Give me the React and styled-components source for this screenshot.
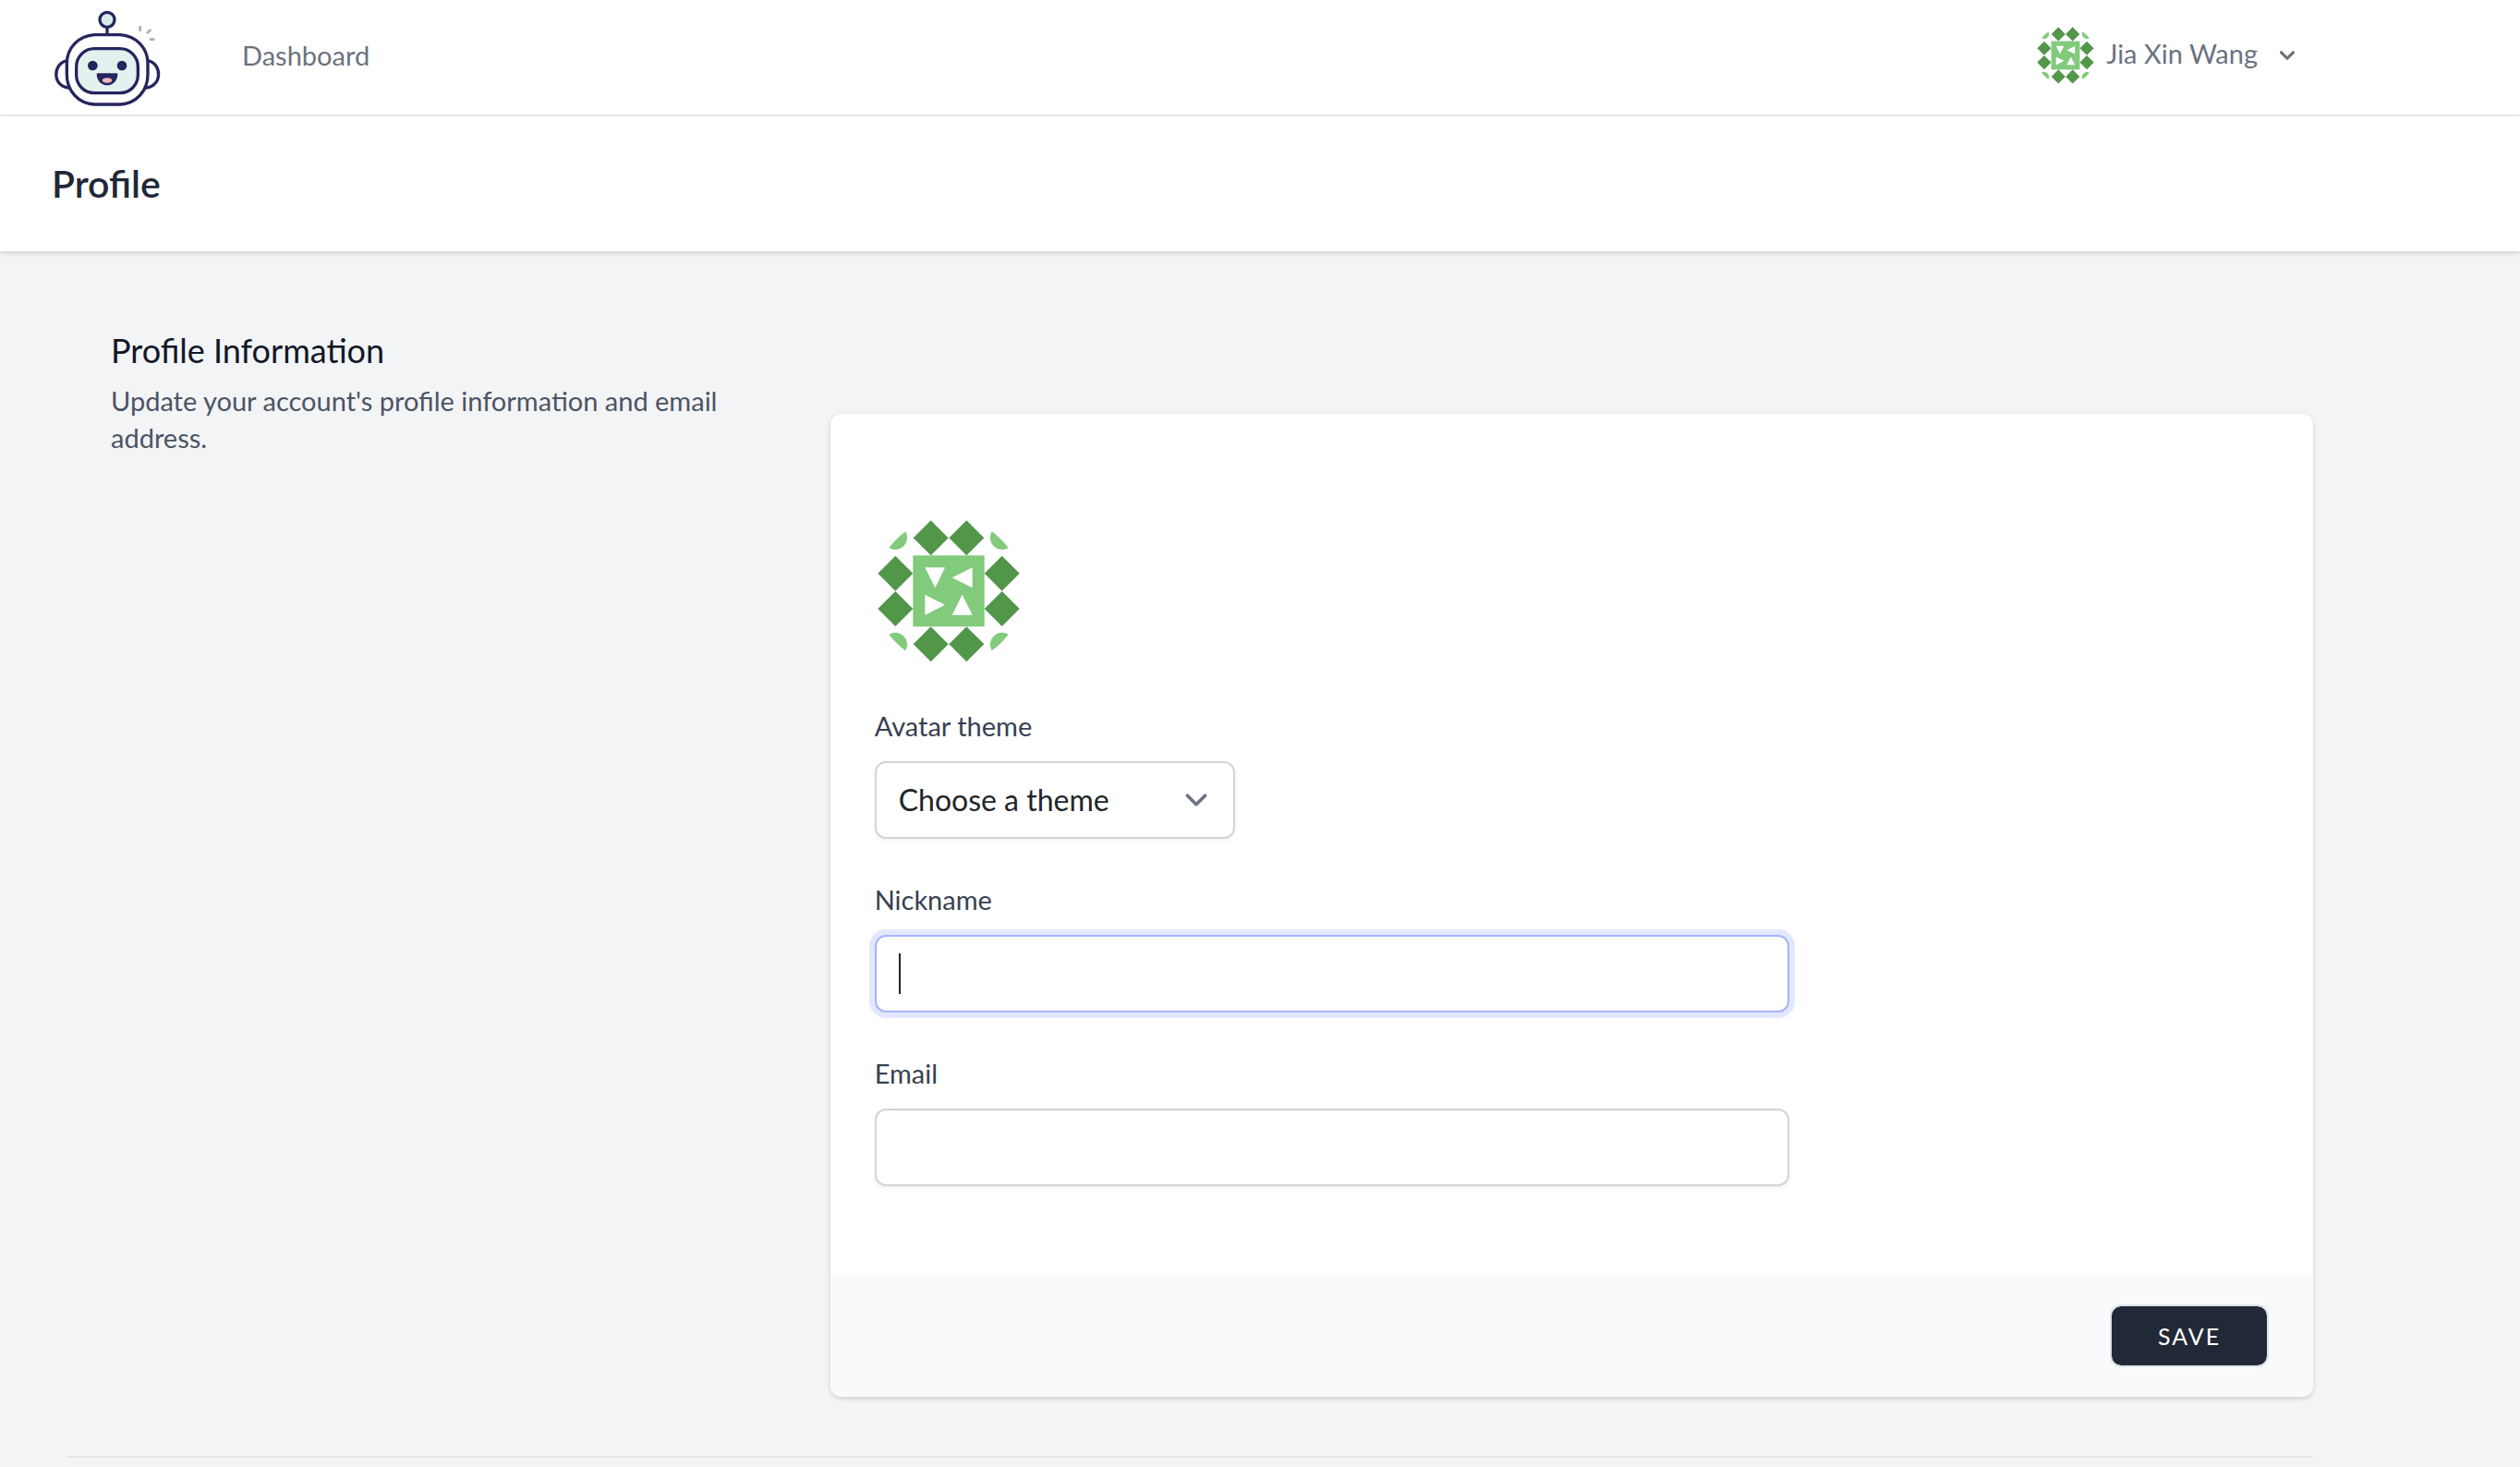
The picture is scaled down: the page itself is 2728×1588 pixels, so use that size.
import React, { useState } from "react";
import styled, { createGlobalStyle, css } from "styled-components";

const GlobalStyle = createGlobalStyle`
  *, *::before, *::after { box-sizing: border-box; }
  body {
    margin: 0;
    background: #f3f4f6;
    font-family: Lato, "Noto Sans", sans-serif;
    font-size: 29px;
    line-height: 40px;
    color: #212529;
  }
  h1, h2, p { margin: 0; }
  button, input, select { font-family: inherit; }
`;

const NavBar = styled.nav`
  background: #fff;
  border-bottom: 2px solid #ececee;
`;

const NavInner = styled.div`
  display: flex;
  align-items: center;
  height: 124px;
  max-width: 2560px;
  padding: 0 68px 0 58px;
`;

const LogoLink = styled.a`
  display: flex;
  margin-right: 88px;
`;

const NavLink = styled.a`
  padding-bottom: 4px;
  color: #6b7280;
  text-decoration: none;
`;

const UserMenu = styled.button`
  display: flex;
  align-items: center;
  margin-left: auto;
  padding: 0 0 4px;
  border: 0;
  background: none;
  color: #6b7280;
  font-size: 29px;
  line-height: 40px;
  cursor: pointer;
`;

const UserName = styled.span`
  padding: 0 16px 4px 12px;
`;

const PageHeader = styled.header`
  position: relative;
  background: #fff;
  box-shadow: 0 2px 6px rgba(0, 0, 0, 0.1), 0 2px 4px rgba(0, 0, 0, 0.06);
`;

const PageTitle = styled.h1`
  max-width: 2560px;
  padding: 48px 56px;
  font-size: 41px;
  line-height: 50px;
  font-weight: 600;
  color: #1f2937;
`;

const Main = styled.main`
  max-width: 2560px;
  padding: 80px 56px 80px 72px;
`;

const Section = styled.section`
  display: grid;
  grid-template-columns: repeat(3, minmax(0, 1fr));
  column-gap: 48px;
`;

const Intro = styled.div`
  padding-left: 48px;
`;

const SectionTitle = styled.h2`
  margin-bottom: 8px;
  font-size: 36px;
  line-height: 54px;
  font-weight: 400;
  color: #111827;
`;

const SectionText = styled.p`
  color: #4b5563;
`;

const Card = styled.form`
  grid-column: span 2;
  margin-top: 96px;
  border-radius: 12px;
  overflow: hidden;
  background: #fff;
  box-shadow: 0 2px 6px rgba(0, 0, 0, 0.1), 0 2px 4px rgba(0, 0, 0, 0.06);
`;

const CardBody = styled.div`
  display: grid;
  grid-template-columns: repeat(6, minmax(0, 1fr));
  gap: 48px;
  padding: 112px 48px 96px;
`;

const Cell = styled.div`
  grid-column: span 4;
`;

const Label = styled.label`
  display: block;
  margin-bottom: 20px;
  line-height: 36px;
  color: #374151;
`;

const ControlBox = styled.div`
  position: relative;
  width: ${(p) => p.$width || "100%"};
`;

const control = css`
  display: block;
  width: 100%;
  height: 84px;
  margin: 0;
  padding: 16px 24px;
  border: 2px solid #d1d5db;
  border-radius: 12px;
  outline: none;
  background: #fff;
  color: #212529;
  font-size: 32px;
  line-height: 48px;
  box-shadow: 0 2px 4px rgba(0, 0, 0, 0.05);
`;

const TextInput = styled.input`
  ${control}
  ${(p) =>
    p.$active &&
    css`
      border-color: #a5b4fc;
      box-shadow: 0 0 0 6px #e2e8fd;
      caret-color: transparent;
    `}
`;

const Select = styled.select`
  ${control}
  appearance: none;
  padding: 16px 80px 16px 24px;
`;

const SelectArrow = styled.svg`
  position: absolute;
  top: 18px;
  right: 18px;
  width: 48px;
  height: 48px;
  pointer-events: none;
`;

const Caret = styled.span`
  position: absolute;
  top: 20px;
  left: 26px;
  width: 2px;
  height: 44px;
  background: #212529;
`;

const CardFooter = styled.div`
  display: flex;
  justify-content: flex-end;
  padding: 32px 48px;
  background: #f9fafb;
  box-shadow: 0 -1px 2px rgba(0, 0, 0, 0.03);
`;

const SaveButton = styled.button`
  min-width: 172px;
  height: 68px;
  padding: 0 40px;
  border: 2px solid #dfe3ea;
  border-radius: 12px;
  background: #222936;
  background-clip: padding-box;
  color: #fff;
  font-size: 25px;
  line-height: 32px;
  font-weight: 400;
  letter-spacing: 2px;
  text-transform: uppercase;
  cursor: pointer;
`;

const Divider = styled.hr`
  height: 2px;
  margin: 64px 0 0;
  border: 0;
  background: #e5e7eb;
`;

function RobotLogo() {
  return (
    <svg width="116" height="106" viewBox="174 27 348 318" fill="none" aria-hidden="true">
      <g stroke="#25265e" strokeWidth="10">
        <path d="M219 197C171 203 166 284 229 286" />
        <path d="M479 197C526 203 531 284 468 286" />
        <path d="M348 90v22" />
        <circle cx="348" cy="64" r="24" fill="#d8edeb" />
        <path
          d="M307 113H390C443 117 480 155 480 206V242C480 295 443 336 390 339H307C254 336 217 295 217 242V206C217 155 254 117 307 113Z"
          fill="#fff"
        />
        <rect x="248" y="158" width="200" height="144" rx="58" fill="#e4f2ef" />
      </g>
      <g fill="#25265e">
        <circle cx="301" cy="213" r="16" />
        <circle cx="396" cy="213" r="16" />
        <path d="M317 238h62q3 0 3 4c-1 21-16 35-34 35s-33-14-34-35q0-4 3-4Z" />
      </g>
      <ellipse cx="348" cy="261" rx="16" ry="8" fill="#f1b5b7" />
      <g stroke="#a3b0b8" strokeWidth="8" strokeLinecap="round">
        <path d="M455 88v10M488 98l-9 8M489 128h10" />
      </g>
    </svg>
  );
}

const diamonds = [
  [233, 97], [349, 97], [118, 212], [118, 327],
  [464, 212], [464, 327], [233, 442], [349, 442],
];

const corners = [
  "",
  "translate(582 0) scale(-1 1)",
  "translate(0 539) scale(1 -1)",
  "translate(582 539) scale(-1 -1)",
];

const AvatarImage = styled.svg`
  display: block;
`;

function Avatar({ size }) {
  return (
    <AvatarImage width={size} height={size} viewBox="51 30 480 480" role="img" aria-label="Avatar">
      <g fill="#52964a">
        {diamonds.map(([x, y]) => (
          <path key={`${x}-${y}`} d={`M${x} ${y - 57}l57 57l-57 57l-57-57Z`} />
        ))}
      </g>
      <g fill="#82ca7c">
        {corners.map((t) => (
          <path key={t} d="M97 129Q121 98 151 76A39 39 0 0 1 97 129Z" transform={t || undefined} />
        ))}
        <path d="M175 154h232v231h-232Z" />
      </g>
      <path
        fill="#fff"
        d="M214 193H279L247 259ZM302 226L368 193V259ZM214 281L279 314L214 348ZM335 281L368 347H302Z"
      />
    </AvatarImage>
  );
}

export default function App() {
  const [nickname, setNickname] = useState("");
  const [email, setEmail] = useState("");

  return (
    <>
      <GlobalStyle />
      <NavBar>
        <NavInner>
          <LogoLink href="#home" aria-label="Home">
            <RobotLogo />
          </LogoLink>
          <NavLink href="#dashboard">Dashboard</NavLink>
          <UserMenu type="button">
            <Avatar size={64} />
            <UserName>Jia Xin Wang</UserName>
            <svg width="32" height="32" viewBox="0 0 20 20" fill="#6b7280" aria-hidden="true">
              <path d="M5.293 7.293a1 1 0 011.414 0L10 10.586l3.293-3.293a1 1 0 111.414 1.414l-4 4a1 1 0 01-1.414 0l-4-4a1 1 0 010-1.414z" />
            </svg>
          </UserMenu>
        </NavInner>
      </NavBar>
      <PageHeader>
        <PageTitle>Profile</PageTitle>
      </PageHeader>
      <Main>
        <Section>
          <Intro>
            <SectionTitle>Profile Information</SectionTitle>
            <SectionText>Update your account's profile information and email address.</SectionText>
          </Intro>
          <Card onSubmit={(e) => e.preventDefault()}>
            <CardBody>
              <Cell>
                <Avatar size={160} />
              </Cell>
              <Cell>
                <Label htmlFor="theme">Avatar theme</Label>
                <ControlBox $width="390px">
                  <Select id="theme" defaultValue="">
                    <option value="">Choose a theme</option>
                  </Select>
                  <SelectArrow viewBox="0 0 20 20" fill="none" aria-hidden="true">
                    <path d="M6 8l4 4 4-4" stroke="#6b7280" strokeWidth="1.5" strokeLinecap="round" strokeLinejoin="round" />
                  </SelectArrow>
                </ControlBox>
              </Cell>
              <Cell>
                <Label htmlFor="nickname">Nickname</Label>
                <ControlBox>
                  <TextInput
                    id="nickname"
                    type="text"
                    $active
                    value={nickname}
                    onChange={(e) => setNickname(e.target.value)}
                  />
                  {nickname === "" && <Caret />}
                </ControlBox>
              </Cell>
              <Cell>
                <Label htmlFor="email">Email</Label>
                <TextInput id="email" type="email" value={email} onChange={(e) => setEmail(e.target.value)} />
              </Cell>
            </CardBody>
            <CardFooter>
              <SaveButton type="submit">Save</SaveButton>
            </CardFooter>
          </Card>
        </Section>
        <Divider />
      </Main>
    </>
  );
}
